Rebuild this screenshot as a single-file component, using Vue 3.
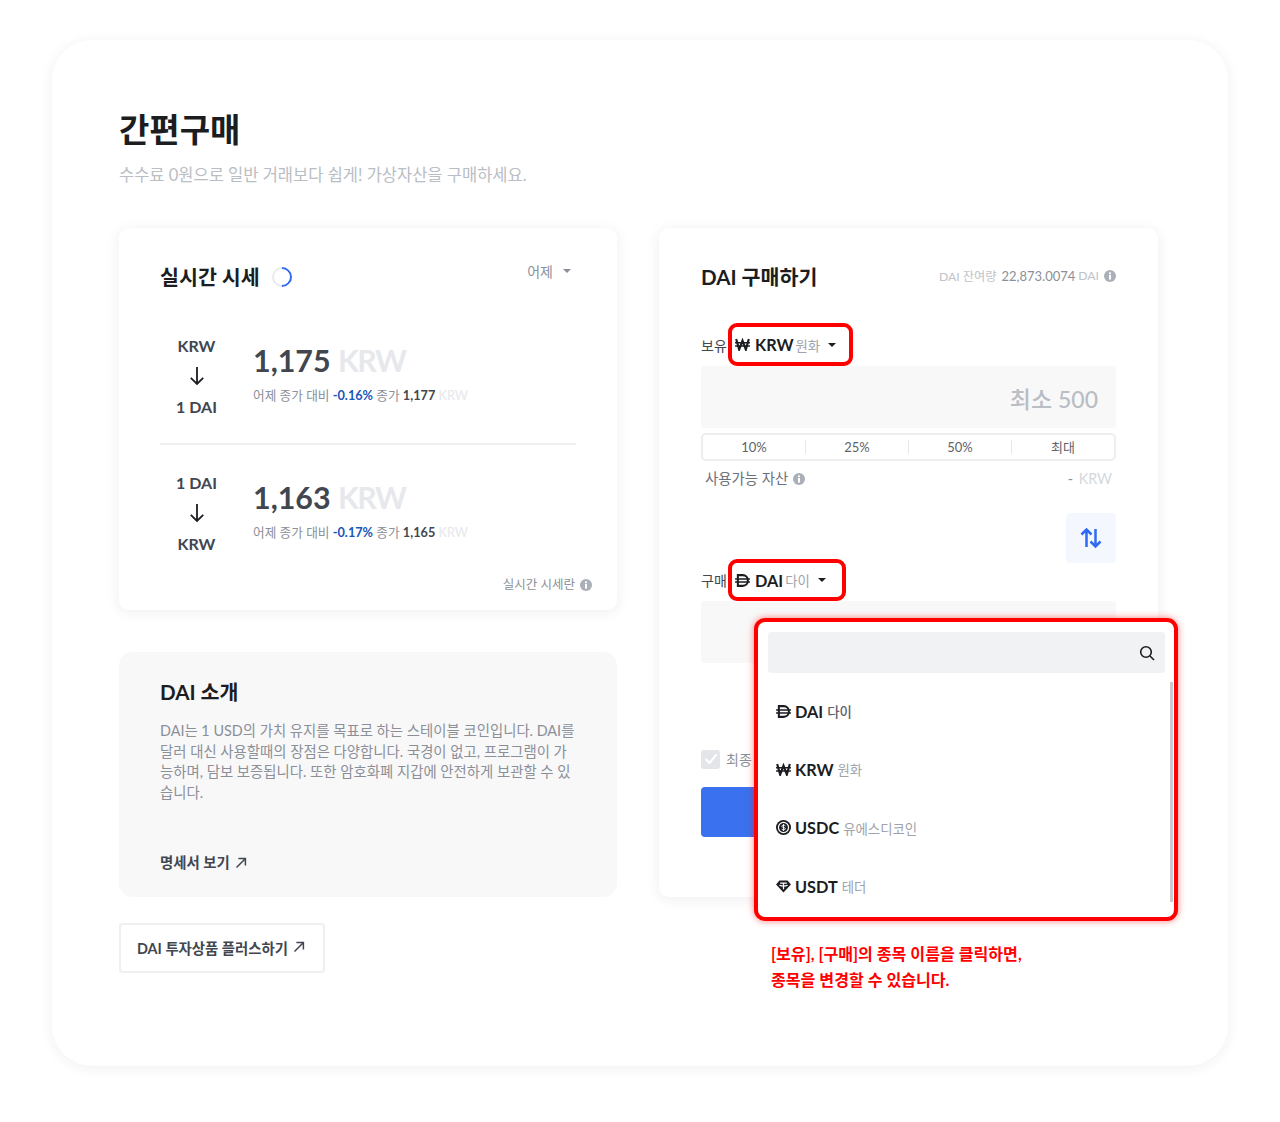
<template>
  <div class="page">
    <svg class="sprite" width="0" height="0" aria-hidden="true">
      <symbol id="ic-krw" viewBox="0 0 16 14">
        <path d="M1.200 1 4.400 12.500 8 2.800 11.600 12.500 14.800 1" fill="none" stroke="currentColor" stroke-width="2.300" />
        <path d="M0 5.200H16M0 8.600H16" fill="none" stroke="currentColor" stroke-width="1.600" />
      </symbol>
      <symbol id="ic-dai" viewBox="0 0 16 14">
        <path d="M3 1.200H8.200C11.600 1.200 13.800 3.600 13.800 7S11.600 12.800 8.200 12.800H3Z" fill="none" stroke="currentColor" stroke-width="2.200" />
        <path d="M0 5.300H16M0 8.700H16" fill="none" stroke="currentColor" stroke-width="1.600" />
      </symbol>
      <symbol id="ic-usdc" viewBox="0 0 16 16">
        <circle cx="8" cy="8" r="8" fill="currentColor" />
        <circle cx="8" cy="8" r="5.400" fill="none" stroke="#fff" stroke-width="1.300" />
        <path d="M10 6.200C9.600 5.400 6.200 5 6.200 6.700 6.200 8.500 10 7.500 10 9.300 10 11 6.400 10.600 6 9.800M8 4.400V11.600" fill="none" stroke="#fff" stroke-width="1" />
      </symbol>
      <symbol id="ic-usdt" viewBox="0 0 16 14">
        <path d="M3.600 .5H12.400L16 4.800 8 13.500 0 4.800Z" fill="currentColor" />
        <path d="M4.400 3.400H11.600M8 3.400V10M3.600 5.600C6 6.600 10 6.600 12.400 5.600" fill="none" stroke="#fff" stroke-width="1.300" />
      </symbol>
      <symbol id="ic-info" viewBox="0 0 12 12">
        <circle cx="6" cy="6" r="6" fill="currentColor" />
        <rect x="5" y="5" width="2" height="4.600" fill="#fff" />
        <rect x="5" y="2.400" width="2" height="1.800" fill="#fff" />
      </symbol>
      <symbol id="ic-out" viewBox="0 0 12 12">
        <path d="M1.500 10.500 10 2M3.400 1.600H10.400V8.600" fill="none" stroke="currentColor" stroke-width="1.500" />
      </symbol>
    </svg>

    <div class="sheet">
      <h1 class="page-title">간편구매</h1>
      <p class="page-sub">수수료 0원으로 일반 거래보다 쉽게! 가상자산을 구매하세요.</p>

      <div class="columns">
        <div class="left">
          <section class="card rate-card">
            <div class="rate-head">
              <h2 class="card-title">실시간 시세</h2>
              <span class="spinner"></span>
              <span class="period">어제<i class="caret gray"></i></span>
            </div>

            <div v-for="(r, i) in rates" :key="i" class="rate-row" :class="{ divided: i === 0 }">
              <div class="pair">
                <span>{{ r.from }}</span>
                <svg class="down" width="16" height="20" viewBox="0 0 16 20">
                  <path d="M8 1V18M1.800 11.800 8 18 14.200 11.800" fill="none" stroke="#1b1d21" stroke-width="1.800" />
                </svg>
                <span>{{ r.to }}</span>
              </div>
              <div class="price">
                <div class="price-main">{{ r.price }} <em>KRW</em></div>
                <div class="price-sub">
                  어제 종가 대비 <b class="minus">{{ r.change }}</b> 종가 <b>{{ r.close }}</b> <em>KRW</em>
                </div>
              </div>
            </div>

            <div class="rate-foot">
              실시간 시세란
              <svg class="info" width="12" height="12"><use href="#ic-info" /></svg>
            </div>
          </section>

          <section class="intro">
            <h2 class="card-title">DAI 소개</h2>
            <p class="intro-text">DAI는 1 USD의 가치 유지를 목표로 하는 스테이블 코인입니다. DAI를 달러 대신 사용할때의 장점은 다양합니다. 국경이 없고, 프로그램이 가능하며, 담보 보증됩니다. 또한 암호화폐 지갑에 안전하게 보관할 수 있습니다.</p>
            <a class="link">명세서 보기 <svg width="12" height="12"><use href="#ic-out" /></svg></a>
          </section>

          <a class="plus-btn">DAI 투자상품 플러스하기 <svg width="12" height="12"><use href="#ic-out" /></svg></a>
        </div>

        <section class="card buy-card">
          <div class="buy-head">
            <h2 class="card-title">DAI 구매하기</h2>
            <div class="balance">
              DAI 잔여량 <span class="balance-num">22,873.0074</span> DAI
              <svg class="info" width="12" height="12"><use href="#ic-info" /></svg>
            </div>
          </div>

          <div class="pick-row first">
            <span class="pick-label">보유</span>
            <div class="picker">
              <svg class="coin" width="15" height="13"><use href="#ic-krw" /></svg>
              <b>KRW</b><span class="kr">원화</span><i class="caret"></i>
            </div>
          </div>
          <div class="amount">최소 500</div>

          <div class="percents">
            <span v-for="p in percents" :key="p">{{ p }}</span>
          </div>
          <div class="avail">
            <span>사용가능 자산 <svg class="info" width="12" height="12"><use href="#ic-info" /></svg></span>
            <span class="avail-val">- <em>KRW</em></span>
          </div>

          <div class="swap-wrap">
            <button class="swap">
              <svg width="22" height="22" viewBox="0 0 22 22">
                <path d="M6.500 20V2.500M1.500 7.500 6.500 2.500 11.500 7.500M15.500 2V19.500M10.500 14.500 15.500 19.500 20.500 14.500" fill="none" stroke="#2f6bf0" stroke-width="2.500" />
              </svg>
            </button>
          </div>

          <div class="pick-row">
            <span class="pick-label">구매</span>
            <div class="picker buy">
              <svg class="coin" width="15" height="13"><use href="#ic-dai" /></svg>
              <b>DAI</b><span class="kr">다이</span><i class="caret"></i>
            </div>
          </div>
          <div class="amount"></div>

          <label class="agree"><span class="check"><svg width="14" height="12" viewBox="0 0 14 12"><path d="M1.500 6 5.500 10 12.500 1.500" fill="none" stroke="#fff" stroke-width="2" /></svg></span>최종</label>
          <div class="submit"></div>

          <!-- 종목 선택 드롭다운 -->
          <div class="menu">
            <div class="search">
              <svg width="16" height="16" viewBox="0 0 16 16">
                <circle cx="7" cy="7" r="5.300" fill="none" stroke="#1b1d21" stroke-width="1.600" />
                <path d="M11 11 15 15" stroke="#1b1d21" stroke-width="1.600" />
              </svg>
            </div>
            <ul class="coin-list">
              <li v-for="(c, i) in coins" :key="c.code" :class="{ selected: i === 0 }">
                <svg class="coin" width="15" :height="c.code === 'USDC' ? 15 : 13"><use :href="c.icon" /></svg>
                <b>{{ c.code }}</b><span class="kr">{{ c.name }}</span>
              </li>
            </ul>
            <span class="thumb"></span>
          </div>
          <p class="note">[보유], [구매]의 종목 이름을 클릭하면,<br />종목을 변경할 수 있습니다.</p>
        </section>
      </div>
    </div>
  </div>
</template>

<script setup>
const rates = [
  { from: 'KRW', to: '1 DAI', price: '1,175', change: '-0.16%', close: '1,177' },
  { from: '1 DAI', to: 'KRW', price: '1,163', change: '-0.17%', close: '1,165' },
];

const percents = ['10%', '25%', '50%', '최대'];

const coins = [
  { code: 'DAI', name: '다이', icon: '#ic-dai' },
  { code: 'KRW', name: '원화', icon: '#ic-krw' },
  { code: 'USDC', name: '유에스디코인', icon: '#ic-usdc' },
  { code: 'USDT', name: '테더', icon: '#ic-usdt' },
];
</script>

<style>
html, body { margin: 0; background: #fff; }
</style>

<style scoped>
.page {
  font-family: Lato, "Noto Sans CJK KR", sans-serif;
  color: #1b1d21;
  padding: 40px 52px 56px;
  width: 1176px;
}
.sprite { position: absolute; }
.sheet {
  height: 1026px;
  box-sizing: border-box;
  padding: 67px 70px 0 67px;
  border-radius: 40px;
  background: #fff;
  box-shadow: 0 2px 14px rgba(30, 40, 60, 0.07);
}
.page-title { margin: 0; font-size: 33px; line-height: 44px; font-weight: 700; }
.page-sub { margin: 12px 0 0; font-size: 16.500px; line-height: 24px; color: #b9bdc4; }

.columns { display: flex; gap: 42px; margin-top: 41px; }
.left { width: 498px; flex-shrink: 0; }
.card {
  background: #fff;
  border-radius: 10px;
  box-shadow: 0 2px 14px rgba(30, 40, 60, 0.08);
}
.card-title { margin: 0; font-size: 20.600px; line-height: 30px; font-weight: 700; }

/* 실시간 시세 */
.rate-card { height: 382px; box-sizing: border-box; padding: 34px 25px 0 41px; }
.rate-head { display: flex; align-items: center; height: 30px; }
.spinner {
  width: 20px;
  height: 20px;
  box-sizing: border-box;
  margin-left: 12px;
  border-radius: 50%;
  border: 2px solid #e8eaee;
  border-top-color: #2f6bf0;
  border-right-color: #2f6bf0;
  transform: rotate(45deg);
}
.period {
  margin-left: auto;
  margin-right: 21px;
  margin-top: -13px;
  font-size: 14px;
  color: #8b8f98;
}
.caret {
  display: inline-block;
  vertical-align: middle;
  width: 0;
  height: 0;
  margin-left: 10px;
  border-left: 4px solid transparent;
  border-right: 4px solid transparent;
  border-top: 4px solid #1b1d21;
}
.caret.gray { border-top-color: #8b8f98; margin-top: -3px; }

.rate-row { display: flex; align-items: center; height: 135px; margin-right: 16px; }
.rate-row.divided { border-bottom: 2px solid #eef0f2; height: 134px; padding-top: 17px; }
.pair {
  width: 73px;
  flex-shrink: 0;
  display: flex;
  flex-direction: column;
  align-items: center;
  gap: 10px;
  font-size: 16px;
  line-height: 21px;
  font-weight: 700;
  color: #41464f;
}
.price { margin-left: 20px; margin-bottom: 6px; }
.price-main { font-size: 30.400px; line-height: 38px; font-weight: 700; color: #41464f; }
.price em, .avail em { font-style: normal; color: #e6e8ec; }
.price-main em { letter-spacing: -1.500px; }
.price-sub { margin-top: 6px; font-size: 12.700px; line-height: 20px; color: #8b8f98; white-space: nowrap; }
.price-sub b { color: #41464f; }
.price-sub .minus { color: #1b56b8; }
.price-sub em { font-weight: 400; }
.rate-foot {
  display: flex;
  align-items: center;
  justify-content: flex-end;
  gap: 5px;
  margin-top: -5px;
  font-size: 12.500px;
  line-height: 20px;
  color: #8b8f98;
}
.info { color: #abb0b8; flex-shrink: 0; }

/* DAI 소개 */
.intro {
  height: 245px;
  box-sizing: border-box;
  margin-top: 42px;
  padding: 25px 41px 0 41px;
  border-radius: 14px;
  background: #f8f8f9;
}
.intro-text {
  height: 108px;
  margin: 14px 0 0;
  font-size: 14.400px;
  line-height: 20.700px;
  color: #8b8f98;
  word-break: break-all;
}
.link {
  display: inline-flex;
  align-items: center;
  gap: 5px;
  margin-top: 23px;
  font-size: 14.400px;
  line-height: 22px;
  font-weight: 700;
  color: #41464f;
}
.plus-btn {
  display: inline-flex;
  align-items: center;
  gap: 5px;
  height: 50px;
  box-sizing: border-box;
  margin-top: 26px;
  padding: 0 18px 2px 16px;
  border: 2px solid #eeeff1;
  border-radius: 4px;
  font-size: 14.400px;
  font-weight: 700;
  color: #41464f;
}

/* 구매 */
.buy-card {
  position: relative;
  width: 499px;
  height: 669px;
  box-sizing: border-box;
  padding: 34px 42px 0;
}
.buy-head { display: flex; justify-content: space-between; align-items: center; height: 30px; }
.balance {
  display: flex;
  align-items: center;
  gap: 5px;
  margin-top: -3px;
  font-size: 12.200px;
  color: #bfc3ca;
}
.balance-num { color: #8b8f98; font-size: 13px; margin-right: -2px; }
.pick-row { display: flex; align-items: center; height: 42px; }
.pick-row.first { margin-top: 31px; height: 43px; }
.pick-label { width: 27px; font-size: 14px; color: #41464f; white-space: nowrap; }
.picker {
  display: flex;
  align-items: center;
  height: 100%;
  box-sizing: border-box;
  padding: 0 13px 0 3px;
  border: 4px solid #f00;
  border-radius: 9px;
  font-size: 16.300px;
}
.picker.buy { padding-right: 16px; }
.coin { margin-right: 4px; flex-shrink: 0; }
.picker .coin { margin-right: 5px; }
.kr { margin-left: 4px; font-size: 13.400px; color: #9ea3ab; }
.picker .kr { margin-left: 2px; }
.picker .caret { margin-left: 8px; }
.amount {
  height: 62px;
  box-sizing: border-box;
  padding: 0 18px;
  border-radius: 4px;
  background: #f8f8f9;
  text-align: right;
  font-size: 23px;
  line-height: 66px;
  font-weight: 500;
  color: #b9bdc4;
}
.percents {
  display: flex;
  height: 28px;
  box-sizing: border-box;
  margin-top: 5px;
  border: 2px solid #eceef0;
  border-radius: 5px;
  align-items: center;
}
.percents span {
  flex: 1;
  text-align: center;
  font-size: 13px;
  color: #5d626b;
  border-left: 1px solid #e6e8ec;
  line-height: 14px;
}
.percents span:first-child { border-left: 0; }
.avail {
  display: flex;
  justify-content: space-between;
  margin-top: 7px;
  padding: 0 4px;
  font-size: 14.400px;
  line-height: 22px;
  color: #6b7079;
}
.avail .info { vertical-align: -1px; margin-left: 1px; }
.avail-val { color: #8b8f98; word-spacing: 2px; }
.avail em { color: #d5d8dc; }
.swap-wrap { display: flex; justify-content: flex-end; margin-top: 23px; margin-bottom: -4px; height: 50px; }
.swap {
  width: 50px;
  height: 50px;
  padding: 0;
  border: 0;
  border-radius: 4px;
  background: #f4f7fd;
  display: flex;
  align-items: center;
  justify-content: center;
}
.agree {
  display: flex;
  align-items: center;
  gap: 6px;
  margin-top: 86px;
  font-size: 14px;
  color: #8b8f98;
}
.check {
  width: 19px;
  height: 19px;
  border-radius: 3px;
  background: #e3e5e8;
  display: flex;
  align-items: center;
  justify-content: center;
}
.submit { height: 50px; margin-top: 18px; border-radius: 4px; background: #3a71ee; }

/* 오버레이 */
.menu {
  position: absolute;
  left: 95px;
  top: 390px;
  width: 424px;
  height: 303px;
  box-sizing: border-box;
  padding: 10px 9px 0 10px;
  border: 4px solid #f00;
  border-radius: 11px;
  background: #fff;
  box-shadow: 0 0 7px rgba(255, 0, 0, 0.5);
}
.search {
  height: 41px;
  display: flex;
  align-items: center;
  justify-content: flex-end;
  padding-right: 10px;
  border-radius: 3px;
  background: #f1f2f4;
}
.coin-list { list-style: none; margin: 9px 0 0; padding: 0 0 0 8px; }
.coin-list li { display: flex; align-items: center; height: 58.300px; font-size: 16.300px; }
.coin-list .selected .kr { color: #5d626b; font-weight: 500; }
.thumb {
  position: absolute;
  right: 1px;
  top: 60px;
  bottom: 15px;
  width: 3px;
  background: #c9cbcf;
}
.note {
  position: absolute;
  left: 112px;
  top: 713px;
  width: 300px;
  margin: 0;
  font-size: 16.100px;
  line-height: 26px;
  font-weight: 700;
  color: #f00;
  white-space: nowrap;
}
</style>
